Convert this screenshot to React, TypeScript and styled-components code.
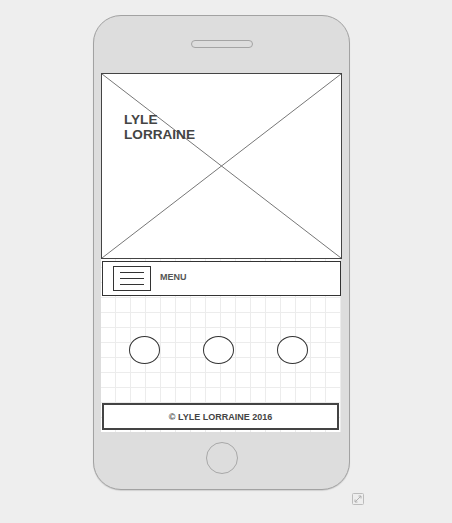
import React, { FC } from "react";
import styled, { createGlobalStyle } from "styled-components";

const GlobalStyle = createGlobalStyle`
  html, body {
    margin: 0;
    padding: 0;
    background: #eeeeee;
  }
  body {
    font-family: "Liberation Sans", Arial, sans-serif;
  }
`;

const Page = styled.div`
  padding: 15px 0 0 93px;
`;

const Stage = styled.div`
  width: 271px;
  display: flex;
  flex-direction: column;
  align-items: flex-start;
`;

const Phone = styled.div`
  box-sizing: border-box;
  width: 257px;
  height: 475px;
  background: #dddddd;
  border: 1px solid #a2a2a2;
  border-radius: 28px;
  box-shadow: 0 1px 1px rgba(0, 0, 0, 0.12);
  display: flex;
  flex-direction: column;
  align-items: center;
  padding-top: 24px;
`;

const Speaker = styled.div`
  box-sizing: border-box;
  width: 62px;
  height: 8px;
  border: 1px solid #a4a4a4;
  border-radius: 4px;
`;

const Screen = styled.div`
  box-sizing: border-box;
  align-self: flex-start;
  margin: 25px 0 0 7px;
  width: 240px;
  height: 359px;
  display: flex;
  flex-direction: column;
  background-color: #ffffff;
  background-image: linear-gradient(to right, transparent 14px, #ececec 14px),
    linear-gradient(to bottom, transparent 14px, #ececec 14px);
  background-size: 15px 15px;
`;

const Hero = styled.div`
  position: relative;
  box-sizing: border-box;
  width: 241px;
  height: 186px;
  border: 1px solid #444444;
  background: #ffffff;
  padding: 38px 0 0 22px;
`;

const Cross = styled.svg`
  position: absolute;
  inset: 0;
  width: 100%;
  height: 100%;
`;

const Brand = styled.h1`
  position: relative;
  margin: 0;
  font-size: 13.6px;
  line-height: 15px;
  font-weight: bold;
  color: #444444;
`;

const MenuBar = styled.div`
  box-sizing: border-box;
  margin: 2px 0 0 1px;
  width: 239px;
  height: 35px;
  border: 1px solid #333333;
  background: #ffffff;
  display: flex;
  align-items: center;
  padding-left: 10px;
  gap: 9px;
`;

const Burger = styled.div`
  box-sizing: border-box;
  width: 38px;
  height: 25px;
  border: 1px solid #333333;
  display: flex;
  flex-direction: column;
  justify-content: center;
  align-items: center;
  gap: 5.3px;
`;

const BurgerLine = styled.span`
  display: block;
  width: 24px;
  height: 1px;
  background: #333333;
`;

const MenuLabel = styled.span`
  font-size: 9px;
  font-weight: bold;
  color: #555555;
  margin-bottom: 3px;
`;

const Dots = styled.div`
  flex: 1;
  display: flex;
  align-items: center;
  padding-left: 28px;
  gap: 43px;
`;

const Dot = styled.div`
  box-sizing: border-box;
  width: 31px;
  height: 28px;
  border: 1px solid #333333;
  border-radius: 50%;
  background: #ffffff;
`;

const Footer = styled.div`
  box-sizing: border-box;
  margin: 0 0 2px 1px;
  width: 237px;
  height: 27px;
  border: 2px solid #444444;
  background: #ffffff;
  display: flex;
  align-items: center;
  justify-content: center;
  font-size: 9px;
  font-weight: bold;
  color: #444444;
`;

const HomeButton = styled.div`
  box-sizing: border-box;
  margin-top: 10px;
  width: 32px;
  height: 32px;
  border: 1px solid #a8a8a8;
  border-radius: 50%;
`;

const ResizeHandle = styled.svg`
  align-self: flex-end;
  margin-top: 3px;
  width: 12px;
  height: 12px;
`;

const App: FC = () => {
  const dots = [0, 1, 2];
  return (
    <Page>
      <GlobalStyle />
      <Stage>
        <Phone>
          <Speaker />
          <Screen>
            <Hero>
              <Cross viewBox="0 0 100 100" preserveAspectRatio="none">
                <line x1="0" y1="0" x2="100" y2="100" stroke="#777" strokeWidth="1" vectorEffect="non-scaling-stroke" />
                <line x1="100" y1="0" x2="0" y2="100" stroke="#777" strokeWidth="1" vectorEffect="non-scaling-stroke" />
              </Cross>
              <Brand>
                LYLE
                <br />
                LORRAINE
              </Brand>
            </Hero>
            <MenuBar>
              <Burger>
                <BurgerLine />
                <BurgerLine />
                <BurgerLine />
              </Burger>
              <MenuLabel>MENU</MenuLabel>
            </MenuBar>
            <Dots>
              {dots.map((d) => (
                <Dot key={d} />
              ))}
            </Dots>
            <Footer>© LYLE LORRAINE 2016</Footer>
          </Screen>
          <HomeButton />
        </Phone>
        <ResizeHandle viewBox="0 0 12 12">
          <rect x="0.5" y="0.5" width="11" height="11" rx="1" fill="none" stroke="#bcbcbc" />
          <path d="M3 9 L9 3 M3 9 L3 6.5 M3 9 L5.5 9 M9 3 L6.5 3 M9 3 L9 5.5" stroke="#b0b0b0" strokeWidth="1" fill="none" />
        </ResizeHandle>
      </Stage>
    </Page>
  );
};

export default App;
